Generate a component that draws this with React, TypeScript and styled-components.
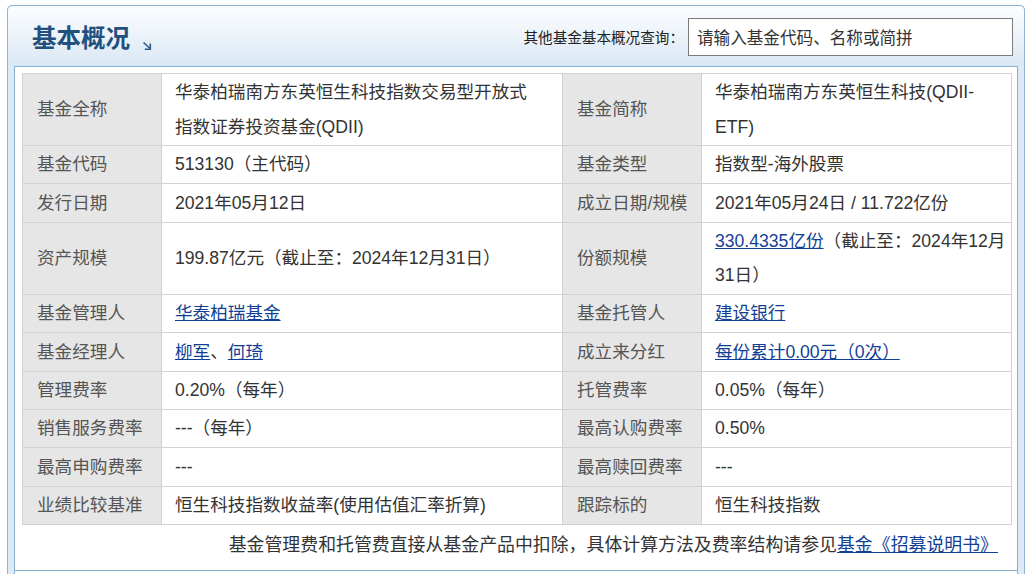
import React from "react";
import styled, { createGlobalStyle } from "styled-components";

const Global = createGlobalStyle`
  html, body { margin: 0; padding: 0; background: #ffffff; }
  *, *::before, *::after { box-sizing: border-box; }
  body { font-family: "Liberation Sans", "Noto Sans CJK SC", sans-serif; color: #333; }
`;

const Page = styled.div`
  padding: 5px 0 0 7px;
`;

const Frame = styled.div`
  width: 1018px;
  border: 1px solid #8fb5d1;
  border-bottom: none;
  border-radius: 5px 5px 0 0;
  background: #dde9f5;
  padding: 0 6px;
`;

const Header = styled.div`
  height: 60px;
  margin: 0 -6px;
  padding: 0 11px 0 24px;
  display: flex;
  align-items: center;
  justify-content: space-between;
  border-radius: 5px 5px 0 0;
  background: linear-gradient(to bottom, #fbfdff 0%, #eef4fa 45%, #d9e7f4 100%);
`;

const TitleWrap = styled.div`
  display: flex;
  align-items: flex-end;
  gap: 12px;
  padding-top: 2px;
`;

const Title = styled.h1`
  margin: 0;
  font-family: "Noto Sans CJK SC", sans-serif;
  font-weight: 700;
  font-size: 24.5px;
  line-height: 30px;
  color: #21507e;
`;

const Arrow = styled.svg`
  width: 10px;
  height: 9px;
  margin-bottom: 2px;
`;

const Search = styled.div`
  display: flex;
  align-items: center;
  gap: 4px;
  padding-top: 1px;
`;

const SearchLabel = styled.span`
  font-family: "Noto Sans CJK SC", sans-serif;
  font-size: 14.6px;
  color: #222;
`;

const SearchBox = styled.div`
  width: 325px;
  height: 38px;
  border: 1px solid #7b7b7b;
  background: #fff;
  display: flex;
  align-items: center;
  padding-left: 8px;
  font-size: 16.6px;
  color: #333;
`;

const Panel = styled.div`
  background: #fff;
  border: 1px solid #86b2cf;
  border-bottom: none;
  padding: 6px 6px 0 7px;
  height: 520px;
`;

const Table = styled.table`
  width: 989px;
  border-collapse: collapse;
  table-layout: fixed;
  font-size: 18px;
`;

const Label = styled.td`
  height: 38.4px;
  background: #e6e6e6;
  border: 1px solid #d2d2d2;
  color: #555;
  padding: 1px 8px 1px 14px;
  line-height: 34.5px;
  vertical-align: middle;
  font-size: 17.6px;
`;

const Value = styled.td`
  height: 38.4px;
  background: #fff;
  border: 1px solid #d2d2d2;
  color: #333;
  padding: 1px 4px 1px 13px;
  line-height: 34.5px;
  vertical-align: middle;
  font-size: 17.6px;
`;

const Line = styled.span`
  white-space: nowrap;
`;

const Link = styled.a`
  color: #123f96;
  text-decoration: underline;
  cursor: pointer;
`;

const Footer = styled.div`
  height: 46px;
  border-bottom: 1px solid #86b2cf;
  margin: 0 -6px 0 -7px;
  padding-right: 19px;
  display: flex;
  align-items: center;
  justify-content: flex-end;
  font-size: 17.9px;
  color: #333;
  padding-bottom: 9px;
`;

type Cell = React.ReactNode;

const rows: [string, Cell, string, Cell][] = [
  [
    "基金全称",
    <>
      <Line>华泰柏瑞南方东英恒生科技指数交易型开放式</Line>
      <br />
      <Line>指数证券投资基金(QDII)</Line>
    </>,
    "基金简称",
    <>
      <Line>华泰柏瑞南方东英恒生科技(QDII-</Line>
      <br />
      <Line>ETF)</Line>
    </>,
  ],
  ["基金代码", "513130（主代码）", "基金类型", "指数型-海外股票"],
  ["发行日期", "2021年05月12日", "成立日期/规模", "2021年05月24日 / 11.722亿份"],
  [
    "资产规模",
    "199.87亿元（截止至：2024年12月31日）",
    "份额规模",
    <>
      <Line>
        <Link>330.4335亿份</Link>（截止至：2024年12月
      </Line>
      <br />
      <Line>31日）</Line>
    </>,
  ],
  ["基金管理人", <Link>华泰柏瑞基金</Link>, "基金托管人", <Link>建设银行</Link>],
  [
    "基金经理人",
    <>
      <Link>柳军</Link>、<Link>何琦</Link>
    </>,
    "成立来分红",
    <Link>每份累计0.00元（0次）</Link>,
  ],
  ["管理费率", "0.20%（每年）", "托管费率", "0.05%（每年）"],
  ["销售服务费率", "---（每年）", "最高认购费率", "0.50%"],
  ["最高申购费率", "---", "最高赎回费率", "---"],
  ["业绩比较基准", "恒生科技指数收益率(使用估值汇率折算)", "跟踪标的", "恒生科技指数"],
];

export default function App() {
  return (
    <>
      <Global />
      <Page>
        <Frame>
          <Header>
            <TitleWrap>
              <Title>基本概况</Title>
              <Arrow viewBox="0 0 10 9">
                <path d="M1.5 1.5 L7.5 7" stroke="#2b5a86" strokeWidth="1.6" fill="none" />
                <path d="M8.3 2.5 V8.2 H2.8" stroke="#2b5a86" strokeWidth="1.6" fill="none" />
              </Arrow>
            </TitleWrap>
            <Search>
              <SearchLabel>其他基金基本概况查询：</SearchLabel>
              <SearchBox>请输入基金代码、名称或简拼</SearchBox>
            </Search>
          </Header>
          <Panel>
            <Table>
              <colgroup>
                <col style={{ width: 139 }} />
                <col style={{ width: 401 }} />
                <col style={{ width: 139 }} />
                <col style={{ width: 310 }} />
              </colgroup>
              <tbody>
                {rows.map(([l1, v1, l2, v2]) => (
                  <tr key={l1}>
                    <Label>{l1}</Label>
                    <Value>{v1}</Value>
                    <Label>{l2}</Label>
                    <Value>{v2}</Value>
                  </tr>
                ))}
              </tbody>
            </Table>
            <Footer>
              基金管理费和托管费直接从基金产品中扣除，具体计算方法及费率结构请参见
              <Link>基金《招募说明书》</Link>
            </Footer>
          </Panel>
        </Frame>
      </Page>
    </>
  );
}
